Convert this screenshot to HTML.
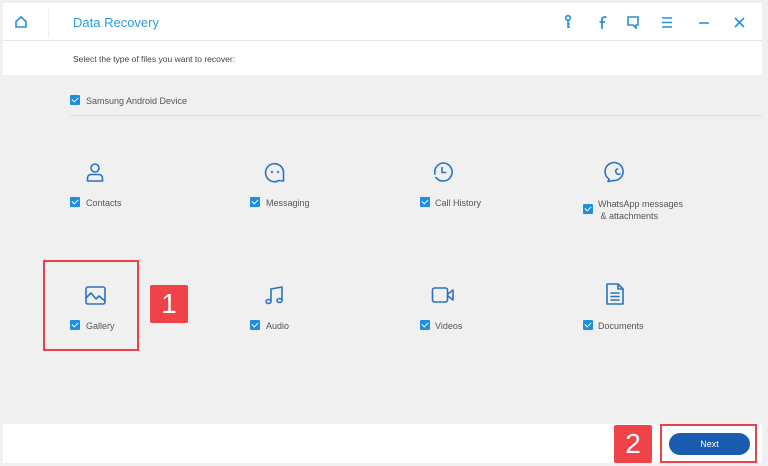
<!DOCTYPE html>
<html><head><meta charset="utf-8"><style>
*{margin:0;padding:0;box-sizing:border-box}
body{width:768px;height:466px;background:#f0f0f0;position:relative;overflow:hidden;font-family:"Liberation Sans",sans-serif;color:#555}
.a{position:absolute}
.cb{position:absolute;width:10px;height:10px;background:#1e8fe0;border-radius:1px}
.cb:after{content:"";position:absolute;left:3px;top:1px;width:3px;height:5px;border:solid #fff;border-width:0 1.5px 1.5px 0;transform:rotate(45deg)}
.lb{position:absolute;font-size:9px;color:#555;white-space:nowrap}
svg.i{position:absolute;fill:none;stroke:#2b73c2;stroke-width:1.6;stroke-linecap:round;stroke-linejoin:round}
</style></head><body>
<div class="a" style="left:3px;top:3px;width:759px;height:72px;background:#fff"></div>
<div class="a" style="left:3px;top:40px;width:759px;height:1px;background:#e6e6e6"></div>
<div class="a" style="left:48px;top:8px;width:1px;height:30px;background:#eee"></div>
<svg class="a" style="left:14px;top:15px" width="14" height="14" viewBox="0 0 14 14" fill="none" stroke="#2a8fdc" stroke-width="1.6"><path d="M2 6.5 7 2l5 4.5V12H2z"/></svg>
<div class="a" style="left:73px;top:15px;font-size:13px;color:#2a9be0">Data Recovery</div>
<svg class="a" style="left:560px;top:14px" width="200" height="18" viewBox="0 0 200 18" fill="none" stroke="#2a8fdc" stroke-width="1.6">
<circle cx="8" cy="4" r="2.3"/><path d="M8 6.5V14M8 10h2M8 13h2"/>
<path d="M42 15V6q0-3 3-3h1.5M39.5 8h5.5" stroke-width="1.8"/>
<path d="M68 3h10v8h-2v3l-3-3h-5z"/>
<path d="M102 4h10M102 8.5h10M102 13h10"/>
<path d="M139 9h10"/>
<path d="M175 4l9 9M184 4l-9 9"/></svg>
<div class="a" style="left:73px;top:54px;font-size:8.5px;color:#444">Select the type of files you want to recover:</div>
<div class="cb" style="left:70px;top:95px"></div><div class="lb" style="left:86px;top:96px">Samsung Android Device</div>
<div class="a" style="left:70px;top:115px;width:692px;height:1px;background:#ddd"></div>

<svg class="i" style="left:84px;top:161px" width="22" height="22" viewBox="0 0 22 22"><circle cx="11" cy="7" r="4"/><path d="M3.5 20v-2.5q0-4 4-4h7q4 0 4 4V20z"/></svg>
<div class="cb" style="left:70px;top:197px"></div><div class="lb" style="left:86px;top:198px">Contacts</div>
<svg class="i" style="left:264px;top:161px" width="22" height="22" viewBox="0 0 22 22"><path d="M15 19.5A9 9 0 1 1 19.5 12.5V20z"/><circle cx="8" cy="11" r=".4"/><circle cx="14" cy="11" r=".4"/></svg>
<div class="cb" style="left:250px;top:197px"></div><div class="lb" style="left:266px;top:198px">Messaging</div>
<svg class="i" style="left:432px;top:161px" width="22" height="22" viewBox="0 0 22 22"><path d="M11 2a9 9 0 1 1-7 14.5M3 13A9 9 0 0 1 11 2"/><path d="M10 6.5v5h3.5"/></svg>
<div class="cb" style="left:420px;top:197px"></div><div class="lb" style="left:435px;top:198px">Call History</div>
<svg class="i" style="left:604px;top:161px" width="22" height="22" viewBox="0 0 22 22"><path d="M5 18A9 9 0 1 1 9 19.5L4 20.5z"/><path d="M13.5 8q-3 1-1 4.5q2 1.5 3.5.5"/></svg>
<div class="cb" style="left:583px;top:204px"></div><div class="lb" style="left:598px;top:198px;line-height:12px">WhatsApp messages<br>&nbsp;&amp; attachments</div>

<svg class="i" style="left:84px;top:284px" width="22" height="22" viewBox="0 0 22 22"><rect x="2" y="3" width="19" height="17" rx="2"/><path d="M2 14l5-5 5 6 3-3 6 5"/></svg>
<div class="cb" style="left:70px;top:320px"></div><div class="lb" style="left:86px;top:321px">Gallery</div>
<svg class="i" style="left:264px;top:284px" width="22" height="22" viewBox="0 0 22 22"><path d="M7 17V5l11-2v13"/><ellipse cx="4.5" cy="17.5" rx="2.5" ry="2"/><ellipse cx="15.5" cy="16.5" rx="2.5" ry="2"/></svg>
<div class="cb" style="left:250px;top:320px"></div><div class="lb" style="left:266px;top:321px">Audio</div>
<svg class="i" style="left:431px;top:284px" width="26" height="22" viewBox="0 0 26 22"><rect x="1.5" y="4" width="15" height="14" rx="2"/><path d="M17 10l5-4v10l-5-4"/></svg>
<div class="cb" style="left:420px;top:320px"></div><div class="lb" style="left:435px;top:321px">Videos</div>
<svg class="i" style="left:604px;top:282px" width="22" height="24" viewBox="0 0 22 24"><path d="M3 2h11l5 5v15H3z"/><path d="M14 2v5h5M7 11h8M7 14.5h8M7 18h8"/></svg>
<div class="cb" style="left:583px;top:320px"></div><div class="lb" style="left:598px;top:321px">Documents</div>

<div class="a" style="left:43px;top:260px;width:96px;height:91px;border:2px solid #e8434a"></div>
<div class="a" style="left:150px;top:285px;width:38px;height:38px;background:#ef4347;color:#fff;font-size:28px;text-align:center;line-height:38px;border-radius:2px">1</div>

<div class="a" style="left:3px;top:424px;width:759px;height:39px;background:#fff"></div>
<div class="a" style="left:614px;top:425px;width:38px;height:38px;background:#ef4347;color:#fff;font-size:28px;text-align:center;line-height:38px;border-radius:2px">2</div>
<div class="a" style="left:660px;top:424px;width:97px;height:39px;border:2px solid #e8434a"></div>
<div class="a" style="left:669px;top:433px;width:81px;height:22px;background:#1a5cb0;border-radius:11px;color:#fff;font-size:9px;text-align:center;line-height:22px">Next</div>
</body></html>
